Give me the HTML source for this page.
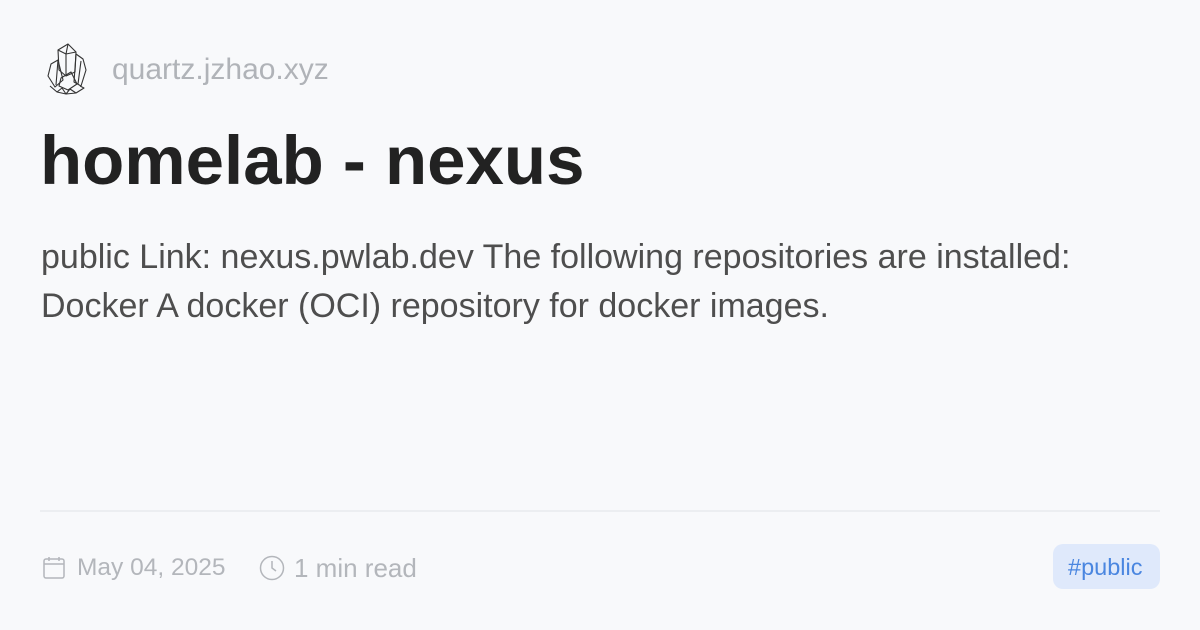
<!DOCTYPE html>
<html><head><meta charset="utf-8"><style>
body{margin:0;width:1200px;height:630px;background:#f8f9fb;font-family:"Liberation Sans",sans-serif;position:relative;overflow:hidden}
.a{position:absolute;white-space:nowrap}
</style></head><body>
<svg class="a" style="left:46px;top:42px" width="42" height="54" viewBox="0 0 42 54" fill="none" stroke="#333" stroke-width="1.1" stroke-linejoin="round">
<path d="M12 8 L22 2 L30 10 L29 30 L20 34 L13 28 Z"/><path d="M22 2 L20 12 L20 34 M12 8 L20 12 L30 10"/>
<path d="M30 12 L37 17 L40 28 L35 44 L28 40 Z M35 19 L32 42"/>
<path d="M5 22 L12 18 L17 38 L9 45 L2 34 Z M12 18 L10 43"/>
<path d="M15 36 L25 30 L31 42 L22 48 L13 44 Z"/>
<path d="M4 44 L11 50 L20 52 L30 51 L38 46 L34 44 M11 50 L16 46 L20 52 L24 47 L30 51"/>
</svg>
<div class="a" style="left:112px;top:53px;font-size:30px;color:#b0b3b8">quartz.jzhao.xyz</div>
<div class="a" style="left:40px;top:121px;font-size:69px;font-weight:bold;color:#222">homelab - nexus</div>
<div class="a" style="left:41px;top:233px;font-size:34px;color:#4e4e4e;line-height:49px">public Link: nexus.pwlab.dev The following repositories are installed:<br>Docker A docker (OCI) repository for docker images.</div>
<div class="a" style="left:40px;top:510px;width:1120px;height:2px;background:#eceef1"></div>
<svg class="a" style="left:43px;top:556px" width="22" height="24" viewBox="0 0 22 24" fill="none" stroke="#b3b6bb" stroke-width="1.5"><rect x="1" y="3" width="20" height="19" rx="2"/><path d="M1 8 H21 M6 1 V5 M16 1 V5"/></svg>
<div class="a" style="left:77px;top:554px;font-size:24.5px;color:#b3b6bb">May 04, 2025</div>
<svg class="a" style="left:259px;top:555px" width="26" height="26" viewBox="0 0 26 26" fill="none" stroke="#b3b6bb" stroke-width="1.5"><circle cx="13" cy="13" r="11.5"/><path d="M13 6 V13 L17 16"/></svg>
<div class="a" style="left:294px;top:553px;font-size:26px;color:#b3b6bb">1 min read</div>
<div class="a" style="left:1053px;top:544px;width:107px;height:45px;border-radius:10px;background:#dfe9fb"></div>
<div class="a" style="left:1068px;top:554px;font-size:23.5px;color:#4a86e0">#public</div>
</body></html>
